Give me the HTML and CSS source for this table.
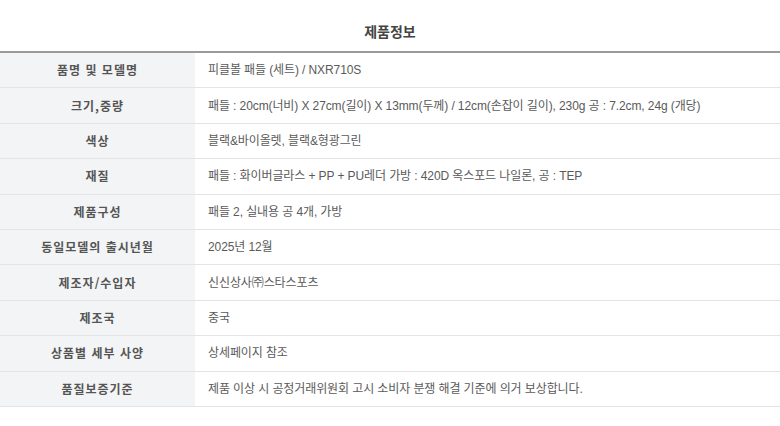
FILE: index.html
```html
<!DOCTYPE html>
<html lang="ko">
<head>
<meta charset="utf-8">
<link rel="stylesheet" href="styles.css">
</head>
<body>
<div class="info">
  <h2 class="info-title">제품정보</h2>
  <table class="info-table">
    <tbody>
      <tr><th>품명 및 모델명</th><td>피클볼 패들 (세트) / NXR710S</td></tr>
      <tr><th>크기,중량</th><td>패들 : 20cm(너비) X 27cm(길이) X 13mm(두께) / 12cm(손잡이 길이), 230g 공 : 7.2cm, 24g (개당)</td></tr>
      <tr><th>색상</th><td>블랙&amp;바이올렛, 블랙&amp;형광그린</td></tr>
      <tr><th>재질</th><td>패들 : 화이버글라스 + PP + PU레더 가방 : 420D 옥스포드 나일론, 공 : TEP</td></tr>
      <tr><th>제품구성</th><td>패들 2, 실내용 공 4개, 가방</td></tr>
      <tr><th>동일모델의 출시년월</th><td>2025년 12월</td></tr>
      <tr><th>제조자/수입자</th><td>신신상사㈜스타스포츠</td></tr>
      <tr><th>제조국</th><td>중국</td></tr>
      <tr><th>상품별 세부 사양</th><td>상세페이지 참조</td></tr>
      <tr><th>품질보증기준</th><td>제품 이상 시 공정거래위원회 고시 소비자 분쟁 해결 기준에 의거 보상합니다.</td></tr>
    </tbody>
  </table>
</div>
</body>
</html>
```
FILE: styles.css
```css
html, body {
  margin: 0;
  padding: 0;
  background: #fff;
}
body {
  font-family: "Noto Sans CJK KR", "Noto Sans", sans-serif;
  color: #555;
}
.info {
  width: 780px;
}
.info-title {
  margin: 0;
  height: 53px;
  box-sizing: border-box;
  padding-top: 21px;
  text-align: center;
  font-size: 14px;
  line-height: 20px;
  font-weight: 700;
  color: #444;
  border-bottom: 2px solid #9a9a9a;
}
.info-table {
  width: 100%;
  border-collapse: collapse;
  table-layout: fixed;
}
.info-table th,
.info-table td {
  height: 34.4px;
  padding: 0;
  border-bottom: 1px solid #e4e4e4;
  font-size: 12px;
  line-height: 16px;
  vertical-align: middle;
}
.info-table th {
  width: 195px;
  background: #f3f4f6;
  color: #555;
  font-weight: 700;
  text-align: center;
  letter-spacing: 1px;
}
.info-table td {
  padding-left: 13px;
  font-family: "Liberation Sans", "Noto Sans CJK KR", sans-serif;
  color: #5a5a5a;
  font-weight: 400;
  text-align: left;
  white-space: nowrap;
  letter-spacing: -0.1px;
}
```
